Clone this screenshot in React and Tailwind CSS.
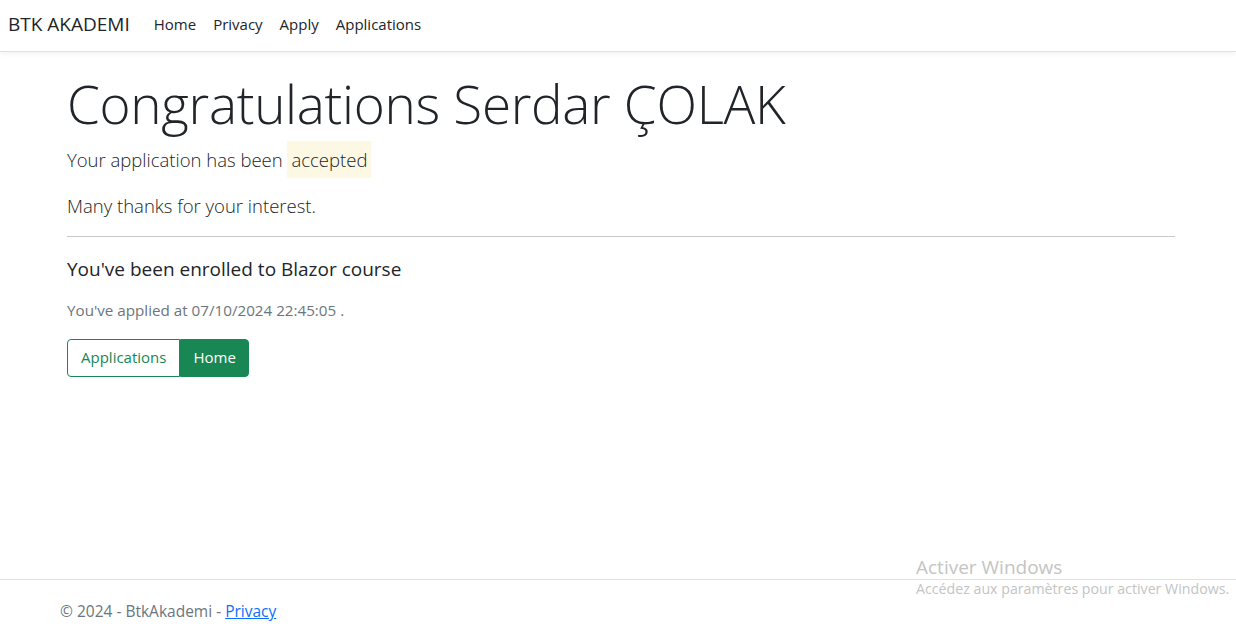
export default function App() {
  return (
    <div className="min-h-[631px] flex flex-col bg-white text-[#212529] font-['Open_Sans',sans-serif] relative">
      {/* Navbar */}
      <nav className="h-[52px] flex items-center border-b border-[#dee2e6] shadow-[0_2px_5px_rgba(0,0,0,0.05)] px-2">
        <span className="text-[19px] mr-6 -mt-[2px]">BTK AKADEMI</span>
        <ul className="flex gap-[17px] text-[15px] -mt-[2px]">
          <li>Home</li>
          <li>Privacy</li>
          <li>Apply</li>
          <li>Applications</li>
        </ul>
      </nav>

      {/* Main */}
      <main className="flex-1 px-[67px] pt-[20px]">
        <h1 className="text-[53px] font-light leading-[1.2] tracking-[-0.3px]">
          Congratulations Serdar ÇOLAK
        </h1>
        <p className="text-[18.5px] font-light mt-[6px] leading-[36px]">
          Your application has been{" "}
          <mark className="bg-[#fcf8e3] text-[#212529] px-[4px] py-[6px]">accepted</mark>
        </p>
        <p className="text-[18.5px] font-light mt-[14px]">Many thanks for your interest.</p>
        <hr className="mt-[17px] w-[1108px] border-[#c9c9c9]" />
        <h5 className="text-[19px] mt-[18px]">You've been enrolled to Blazor course</h5>
        <p className="text-[15.2px] text-[#6c757d] mt-[15px]">You've applied at 07/10/2024 22:45:05 .</p>
        <div className="flex mt-[17px] text-[15px]">
          <button className="h-[38px] px-[13px] border border-[#198754] text-[#198754] rounded-l-[4px]">
            Applications
          </button>
          <button className="h-[38px] px-3 bg-[#198754] border border-[#198754] text-white rounded-r-[4px]">
            Home
          </button>
        </div>
      </main>

      {/* Footer */}
      <footer className="border-t border-[#dee2e6] h-[52px] pt-[20px] px-[60px] text-[15.5px] leading-[22px] text-[#6c757d]">
        <span>
          © 2024 - BtkAkademi - <a className="text-[#0d6efd] underline">Privacy</a>
        </span>
      </footer>

      {/* Windows watermark */}
      <div className="absolute left-[916px] top-[555px] text-[#c4c4c4] pointer-events-none">
        <div className="text-[19px] leading-[24px]">Activer Windows</div>
        <div className="text-[14.2px] leading-[20px]">Accédez aux paramètres pour activer Windows.</div>
      </div>
    </div>
  );
}
